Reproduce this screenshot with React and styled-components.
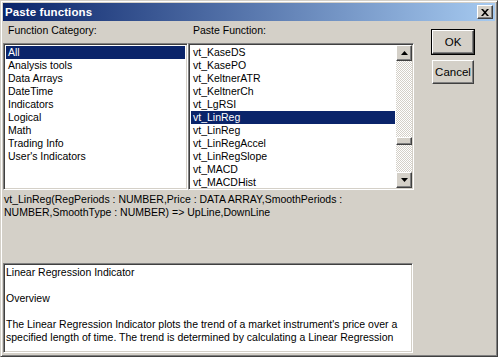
import React from "react";
import styled, { createGlobalStyle } from "styled-components";

const Global = createGlobalStyle`
  html, body { margin: 0; padding: 0; background: #d4d0c8; }
  body { font-family: "Liberation Sans", Arial, sans-serif; }
`;

const Window = styled.div`
  width: 498px;
  height: 357px;
  box-sizing: border-box;
  background: #d4d0c8;
  border: 1px solid;
  border-color: #d4d0c8 #404040 #404040 #d4d0c8;
  box-shadow: inset 1px 1px #ffffff, inset -1px -1px #808080;
  padding: 2px;
  display: flex;
  flex-direction: column;
  font-size: 10.5px;
  color: #000;
`;

const TitleBar = styled.div`
  height: 18px;
  flex: none;
  display: flex;
  align-items: center;
  justify-content: space-between;
  padding: 0 2px 0 2px;
  background: linear-gradient(to right, #0a246a, #a6caf0);
`;

const TitleText = styled.span`
  color: #fff;
  font-weight: bold;
  font-size: 11.5px;
  letter-spacing: 0.1px;
`;

const RaisedBox = styled.div`
  box-sizing: border-box;
  background: #d4d0c8;
  border: 1px solid;
  border-color: #fff #404040 #404040 #fff;
  box-shadow: inset -1px -1px #808080;
  display: flex;
  align-items: center;
  justify-content: center;
`;

const CloseButton = styled(RaisedBox)`
  width: 16px;
  height: 14px;
`;

const Body = styled.div`
  flex: 1;
  display: flex;
  gap: 18px;
  padding-top: 3px;
`;

const Main = styled.div`
  width: 411px;
  display: flex;
  flex-direction: column;
`;

const Columns = styled.div`
  display: grid;
  grid-template-columns: 185px 226px;
`;

const Label = styled.div`
  height: 13px;
  line-height: 13px;
  padding-left: 5px;
  margin-bottom: 6px;
  white-space: nowrap;
`;

const Sunken = styled.div`
  box-sizing: border-box;
  background: #fff;
  border: 1px solid;
  border-color: #808080 #fff #fff #808080;
  box-shadow: inset 1px 1px #404040, inset -1px -1px #d4d0c8;
  padding: 2px 1px 1px 1px;
`;

const ListBox = styled(Sunken)`
  height: 147px;
  display: flex;
  overflow: hidden;
`;

const Items = styled.div`
  flex: 1;
  overflow: hidden;
  padding: 0 1px 0 1px;
`;

const Item = styled.div`
  height: 13px;
  line-height: 13px;
  padding-left: 2px;
  white-space: nowrap;
  background: ${(p) => (p.$selected ? "#0a246a" : "transparent")};
  color: ${(p) => (p.$selected ? "#fff" : "#000")};
`;

const ScrollBar = styled.div`
  width: 16px;
  flex: none;
  display: flex;
  flex-direction: column;
  margin-top: -1px;
`;

const ScrollButton = styled(RaisedBox)`
  width: 16px;
  height: 16px;
  flex: none;
`;

const Track = styled.div`
  flex: 1;
  background-color: #fff;
  background-image: repeating-conic-gradient(#d4d0c8 0 25%, #fff 0 50%);
  background-size: 2px 2px;
  position: relative;
`;

const Thumb = styled(RaisedBox)`
  position: absolute;
  left: 0;
  width: 16px;
  height: 8px;
`;

const Signature = styled.div`
  margin-top: 3px;
  padding-left: 1px;
  line-height: 13px;
  height: 70px;
  white-space: nowrap;
`;

const DescBox = styled(Sunken)`
  width: 410px;
  height: 90px;
  padding: 2px 2px;
  line-height: 13px;
  white-space: nowrap;
  overflow: hidden;
`;

const Para = styled.div`
  min-height: 13px;
`;

const Buttons = styled.div`
  display: flex;
  flex-direction: column;
  gap: 6px;
  padding-top: 6px;
`;

const DialogButton = styled(RaisedBox)`
  width: 42px;
  height: 24px;
  font-size: 11.5px;
  ${(p) =>
    p.$default &&
    `
    outline: 1px solid #000;
    outline-offset: 0;
  `}
`;

const Arrow = ({ up }) => (
  <svg width="7" height="4" viewBox="0 0 7 4">
    <path d={up ? "M3.5 0 L7 4 L0 4 Z" : "M0 0 L7 0 L3.5 4 Z"} fill="#000" />
  </svg>
);

const categories = [
  "All",
  "Analysis tools",
  "Data Arrays",
  "DateTime",
  "Indicators",
  "Logical",
  "Math",
  "Trading Info",
  "User's Indicators",
];

const functions = [
  "vt_KaseDS",
  "vt_KasePO",
  "vt_KeltnerATR",
  "vt_KeltnerCh",
  "vt_LgRSI",
  "vt_LinReg",
  "vt_LinReg",
  "vt_LinRegAccel",
  "vt_LinRegSlope",
  "vt_MACD",
  "vt_MACDHist",
];

export default function App() {
  return (
    <>
      <Global />
      <Window>
        <TitleBar>
          <TitleText>Paste functions</TitleText>
          <CloseButton>
            <svg width="8" height="7" viewBox="0 0 8 7">
              <path
                d="M0 0h2l2 2.2L6 0h2L5 3.5 8 7H6L4 4.8 2 7H0l3-3.5z"
                fill="#000"
              />
            </svg>
          </CloseButton>
        </TitleBar>
        <Body>
          <Main>
            <Columns>
              <Label>Function Category:</Label>
              <Label>Paste Function:</Label>
              <ListBox>
                <Items>
                  {categories.map((c, i) => (
                    <Item key={c} $selected={i === 0}>
                      {c}
                    </Item>
                  ))}
                </Items>
              </ListBox>
              <ListBox>
                <Items>
                  {functions.map((f, i) => (
                    <Item key={i} $selected={i === 5}>
                      {f}
                    </Item>
                  ))}
                </Items>
                <ScrollBar>
                  <ScrollButton>
                    <Arrow up />
                  </ScrollButton>
                  <Track>
                    <Thumb style={{ top: 76 }} />
                  </Track>
                  <ScrollButton>
                    <Arrow />
                  </ScrollButton>
                </ScrollBar>
              </ListBox>
            </Columns>
            <Signature>
              vt_LinReg(RegPeriods : NUMBER,Price : DATA ARRAY,SmoothPeriods :
              <br />
              NUMBER,SmoothType : NUMBER) =&gt; UpLine,DownLine
            </Signature>
            <DescBox>
              <Para>Linear Regression Indicator</Para>
              <Para />
              <Para>Overview</Para>
              <Para />
              <Para>
                The Linear Regression Indicator plots the trend of a market
                instrument's price over a
              </Para>
              <Para>
                specified length of time. The trend is determined by
                calculating a Linear Regression
              </Para>
            </DescBox>
          </Main>
          <Buttons>
            <DialogButton $default>OK</DialogButton>
            <DialogButton>Cancel</DialogButton>
          </Buttons>
        </Body>
      </Window>
    </>
  );
}
